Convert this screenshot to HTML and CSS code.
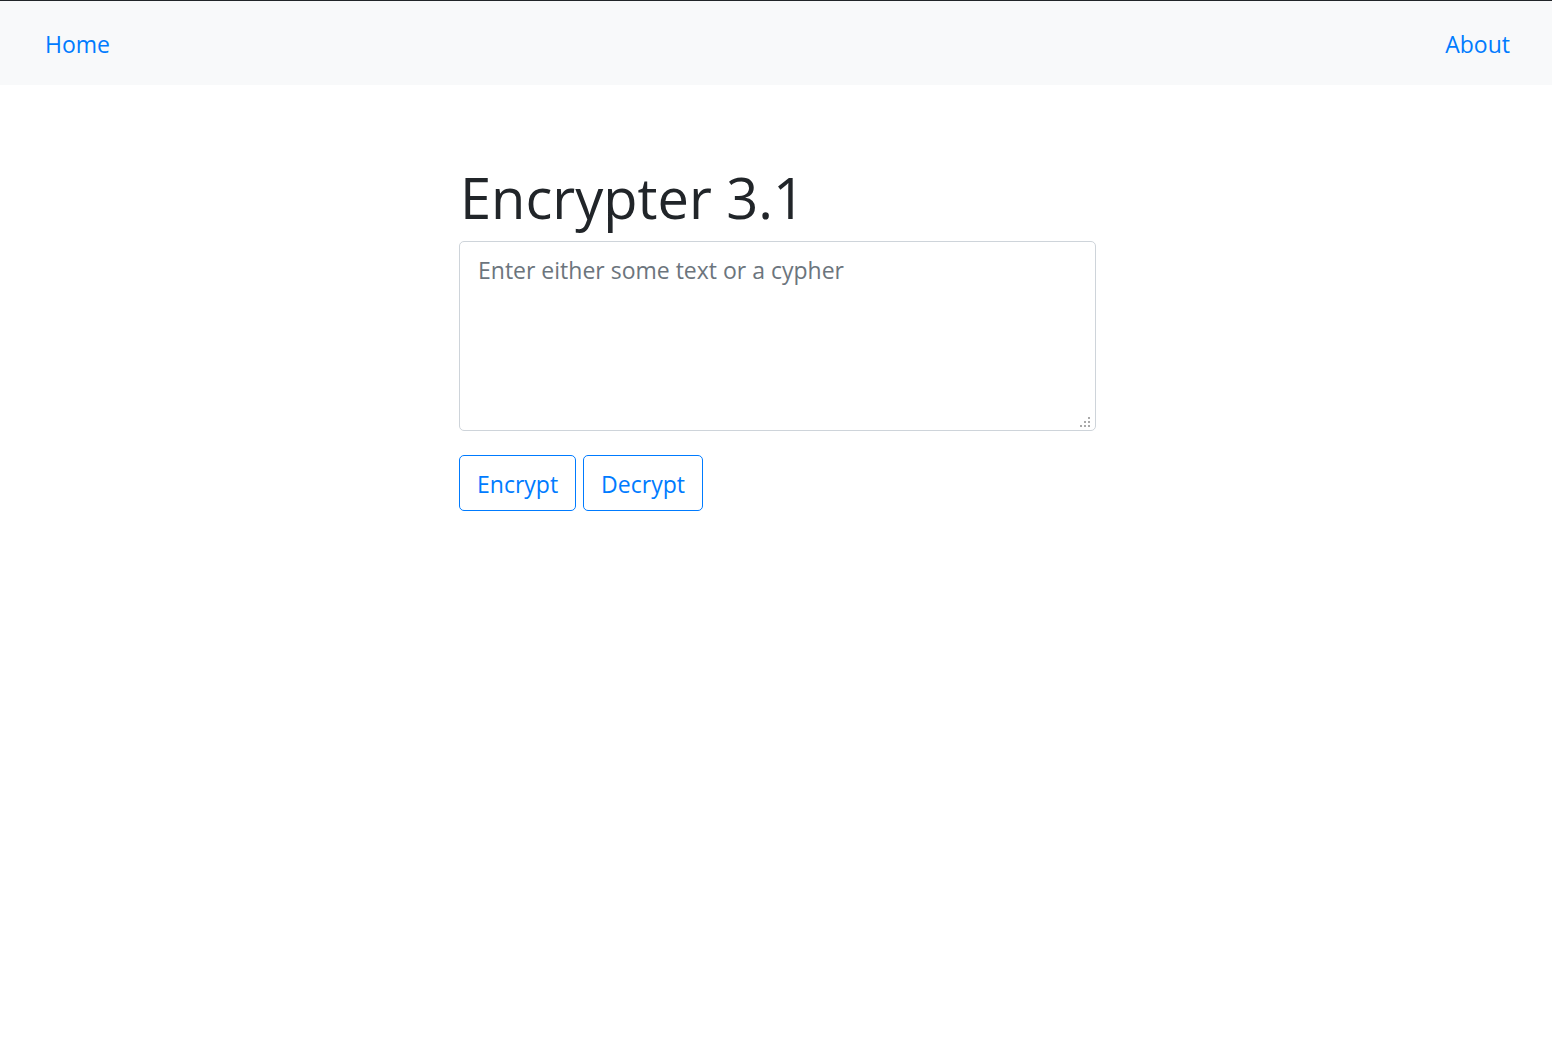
FILE: index.html
```html
<!DOCTYPE html>
<html lang="en">
<head>
<meta charset="utf-8">
<title>Encrypter 3.1</title>
<link rel="stylesheet" href="styles.css">
</head>
<body>
<nav class="navbar">
  <a class="nav-link" href="#">Home</a>
  <a class="nav-link" href="#">About</a>
</nav>
<main class="container">
  <h1 class="title">Encrypter 3.1</h1>
  <div class="input-wrap">
    <textarea class="input" placeholder="Enter either some text or a cypher"></textarea>
    <span class="grip" aria-hidden="true">
      <i class="dot d1"></i><i class="dot d2"></i><i class="dot d3"></i>
      <i class="dot d4"></i><i class="dot d5"></i><i class="dot d6"></i>
    </span>
  </div>
  <div class="actions">
    <button class="btn">Encrypt</button>
    <button class="btn">Decrypt</button>
  </div>
</main>
</body>
</html>
```
FILE: styles.css
```css
html, body {
  margin: 0;
  padding: 0;
  background: #fff;
}
body {
  font-family: "Open Sans", "Noto Sans", sans-serif;
  color: #212529;
  border-top: 1px solid #212529;
}
.navbar {
  background: #f8f9fa;
  height: 84px;
  display: flex;
  justify-content: space-between;
  align-items: center;
  padding: 0 42px 0 45px;
}
.nav-link {
  color: #007bff;
  text-decoration: none;
  font-size: 23px;
  line-height: 36px;
  padding-top: 1px;
}
.container {
  width: 637px;
  margin-left: calc(50% - 317px);
  padding-top: 76px;
}
.title {
  font-size: 56px;
  font-weight: 400;
  line-height: 72px;
  margin: 0 0 8px;
  padding-left: 1px;
}
.input-wrap {
  position: relative;
}
.input {
  display: block;
  box-sizing: border-box;
  width: 637px;
  height: 190px;
  border: 1px solid #ced4da;
  border-radius: 5px;
  padding: 10px 18px 8px;
  font-family: inherit;
  font-size: 23px;
  line-height: 36px;
  color: #495057;
  resize: none;
  margin: 0;
  outline: none;
}
.input::placeholder {
  color: #6c757d;
}
.grip {
  position: absolute;
  right: 6px;
  bottom: 4px;
  width: 10px;
  height: 10px;
}
.dot {
  position: absolute;
  width: 2px;
  height: 2px;
  background: #a9a9a9;
}
.d1 { left: 8px; top: 0; }
.d2 { left: 4px; top: 4px; }
.d3 { left: 8px; top: 4px; }
.d4 { left: 0; top: 8px; }
.d5 { left: 4px; top: 8px; }
.d6 { left: 8px; top: 8px; }
.actions {
  display: flex;
  gap: 7px;
  margin-top: 24px;
}
.btn {
  box-sizing: border-box;
  height: 56px;
  padding: 1px 17px 0;
  background: transparent;
  border: 1px solid #007bff;
  border-radius: 5px;
  color: #007bff;
  font-family: inherit;
  font-size: 23px;
  line-height: 36px;
  cursor: pointer;
}
```
